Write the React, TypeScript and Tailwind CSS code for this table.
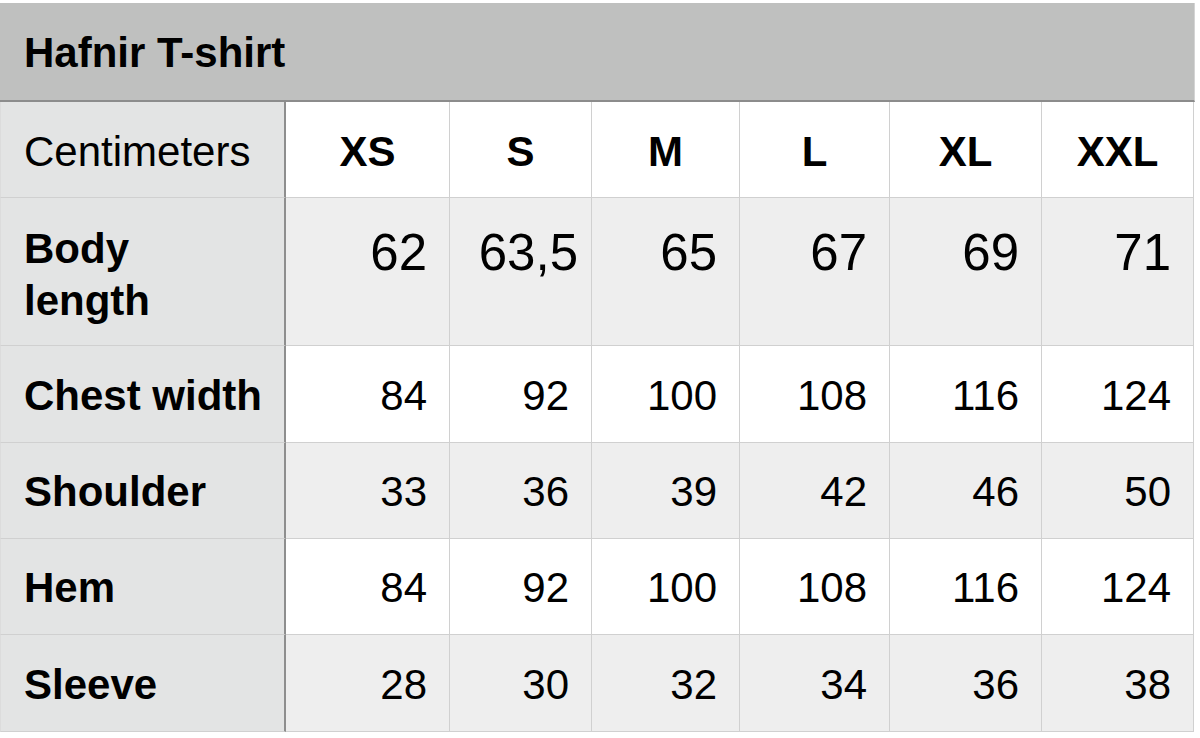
import React from "react";

const sizes = ["XS", "S", "M", "L", "XL", "XXL"];

type Row = { label: string; values: string[]; h: string; bg: string; tall?: boolean };

const rows: Row[] = [
  { label: "Body length", values: ["62", "63,5", "65", "67", "69", "71"], h: "h-[148px]", bg: "bg-[#eeeeee]", tall: true },
  { label: "Chest width", values: ["84", "92", "100", "108", "116", "124"], h: "h-[97px]", bg: "bg-white" },
  { label: "Shoulder", values: ["33", "36", "39", "42", "46", "50"], h: "h-[96px]", bg: "bg-[#eeeeee]" },
  { label: "Hem", values: ["84", "92", "100", "108", "116", "124"], h: "h-[96px]", bg: "bg-white" },
  { label: "Sleeve", values: ["28", "30", "32", "34", "36", "38"], h: "h-[97px]", bg: "bg-[#eeeeee]" },
];

const grid = "grid grid-cols-[286px_164px_142px_148px_150px_152px_152px]";

export default function App() {
  return (
    <div className="w-[1200px] h-[738px] bg-white font-['Liberation_Sans',Arial,sans-serif] text-black pt-[3px] overflow-hidden">
      <div className="w-[1195px]">
        <div className="h-[99px] bg-[#bfc0bf] border-b-2 border-[#8c8c8c] border-r border-r-[#d4d4d4] flex items-center pl-[24px] pt-[2px]">
          <span className="text-[42px] font-bold leading-none">Hafnir T-shirt</span>
        </div>
        <div className={`${grid} h-[96px]`}>
          <div className="bg-[#e3e4e4] border-r-2 border-r-[#8e8e8e] border-b border-b-[#d0d0d0] flex items-center pl-[23px] pt-[4px] border-l border-l-[#dcdcdc]">
            <span className="text-[42px] leading-none">Centimeters</span>
          </div>
          {sizes.map((s) => (
            <div key={s} className="bg-white border-r border-b border-[#d0d0d0] flex items-center justify-center pt-[4px]">
              <span className="text-[42px] font-bold leading-none">{s}</span>
            </div>
          ))}
        </div>
        {rows.map((r) => (
          <div key={r.label} className={`${grid} ${r.h}`}>
            <div
              className={`bg-[#e3e4e4] border-r-2 border-r-[#8e8e8e] border-b border-b-[#d0d0d0] border-l border-l-[#dcdcdc] flex pl-[23px] ${
                r.tall ? "items-start pt-[25px]" : "items-center pt-[3px]"
              }`}
            >
              <span className={`text-[42px] font-bold ${r.tall ? "leading-[52px] w-[140px]" : "leading-none"}`}>{r.label}</span>
            </div>
            {r.values.map((v, i) => (
              <div
                key={i}
                className={`${r.bg} border-r border-b border-[#d0d0d0] flex justify-end ${
                  r.tall ? "items-start pt-[29px]" : "items-center pt-[3px]"
                } ${r.tall && v === "63,5" ? "pr-[13px]" : "pr-[22px]"}`}
              >
                <span className={`${r.tall ? "text-[51px]" : "text-[42px]"} leading-none`}>{v}</span>
              </div>
            ))}
          </div>
        ))}
      </div>
    </div>
  );
}
